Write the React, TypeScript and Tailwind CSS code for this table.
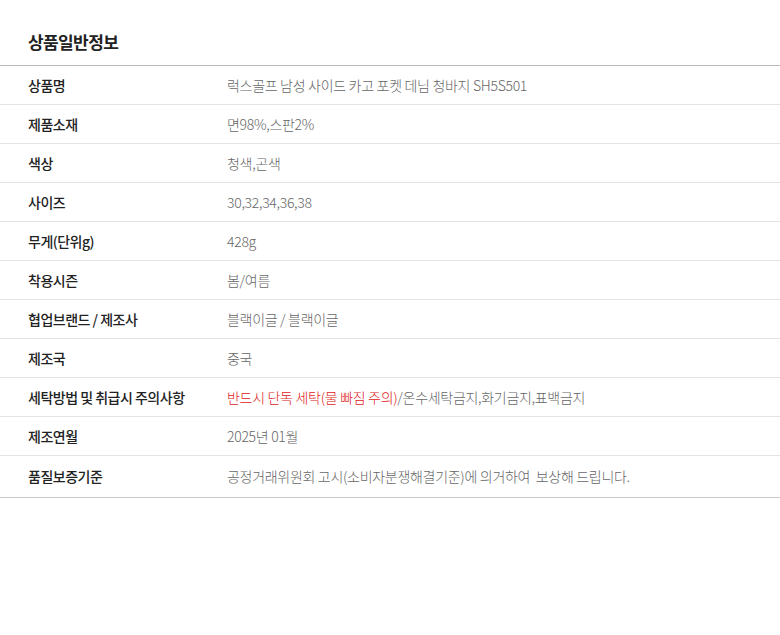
import React from "react";

const rows: { label: string; value: React.ReactNode }[] = [
  { label: "상품명", value: "럭스골프 남성 사이드 카고 포켓 데님 청바지 SH5S501" },
  { label: "제품소재", value: "면98%,스판2%" },
  { label: "색상", value: "청색,곤색" },
  { label: "사이즈", value: "30,32,34,36,38" },
  { label: "무게(단위g)", value: "428g" },
  { label: "착용시즌", value: "봄/여름" },
  { label: "협업브랜드 / 제조사", value: "블랙이글 / 블랙이글" },
  { label: "제조국", value: "중국" },
  {
    label: "세탁방법 및 취급시 주의사항",
    value: (
      <>
        <span className="text-[#e02020]">반드시 단독 세탁(물 빠짐 주의)</span>/온수세탁금지,화기금지,표백금지
      </>
    ),
  },
  { label: "제조연월", value: "2025년 01월" },
  { label: "품질보증기준", value: "공정거래위원회 고시(소비자분쟁해결기준)에 의거하여  보상해 드립니다." },
];

export default function App() {
  return (
    <div
      className="w-[780px] h-[635px] bg-white"
      style={{ fontFamily: '"Noto Sans CJK KR", "Noto Sans", sans-serif' }}
    >
      <div className="pt-[30px] pb-[11px] px-[28px]">
        <h2 className="text-[17px] font-bold text-[#222] leading-[24px] tracking-[-0.6px]">상품일반정보</h2>
      </div>
      <div className="border-t border-[#bbbbbb] border-b border-b-[#c8c8c8]">
        {rows.map((r, i) => (
          <div
            key={i}
            className={`flex items-center ${i < rows.length - 1 ? "h-[39px] border-b border-[#e3e3e3]" : "h-[41px]"}`}
          >
            <div className="w-[227px] shrink-0 pl-[28px] text-[14px] font-medium text-[#222] tracking-[-0.5px]">{r.label}</div>
            <div className="flex-1 text-[14px] font-light text-[#666] tracking-[-0.3px] whitespace-pre">{r.value}</div>
          </div>
        ))}
      </div>
    </div>
  );
}
